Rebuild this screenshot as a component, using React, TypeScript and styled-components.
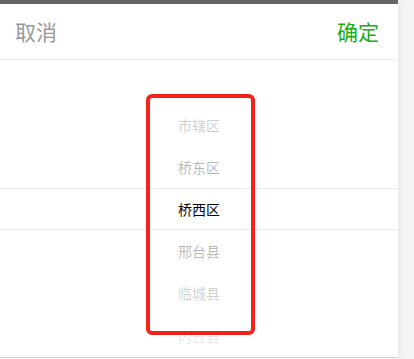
import React from "react";
import styled, { createGlobalStyle } from "styled-components";

const GlobalStyle = createGlobalStyle`
  html, body {
    margin: 0;
    padding: 0;
    background: #f5f5f5;
    font-family: "Noto Sans CJK SC", "Noto Sans", sans-serif;
  }
`;

const items = ["市辖区", "桥东区", "桥西区", "邢台县", "临城县", "内丘县"];
const selected = 2;

const App: React.FC = () => {
  return (
    <>
      <GlobalStyle />
      <Panel>
        <TopBar />
        <Header>
          <Action>取消</Action>
          <Action $primary>确定</Action>
        </Header>
        <Picker>
          <List>
            {items.map((name, i) => (
              <Item key={name} $active={i === selected}>
                {name}
              </Item>
            ))}
          </List>
          <Mask />
          <Indicator />
        </Picker>
        <Highlight />
      </Panel>
    </>
  );
};

export default App;

const Panel = styled.div`
  position: relative;
  width: 398px;
  height: 359px;
  background: #fff;
  box-shadow: 1px 0 6px rgba(0, 0, 0, 0.08);
  display: flex;
  flex-direction: column;
  overflow: hidden;
`;

const TopBar = styled.div`
  height: 4px;
  background: #666;
  flex: none;
`;

const Header = styled.div`
  height: 55px;
  flex: none;
  display: flex;
  align-items: center;
  justify-content: space-between;
  padding: 0 19px 0 15px;
  border-bottom: 1px solid #f0f0f0;
`;

const Action = styled.span<{ $primary?: boolean }>`
  font-size: 21px;
  line-height: 1;
  color: ${(p) => (p.$primary ? "#1aad19" : "#999")};
`;

const Picker = styled.div`
  position: relative;
  height: 297px;
  flex: none;
  overflow: hidden;
  border-bottom: 1px solid #d0d0d0;
`;

const List = styled.div`
  padding-top: 43.5px;
  display: flex;
  flex-direction: column;
`;

const Item = styled.div<{ $active?: boolean }>`
  height: 42.2px;
  display: flex;
  align-items: center;
  justify-content: center;
  font-size: 14px;
  color: #000;
`;

const Mask = styled.div`
  position: absolute;
  inset: 0;
  background-image: linear-gradient(
      180deg,
      rgba(255, 255, 255, 0.95),
      rgba(255, 255, 255, 0.68)
    ),
    linear-gradient(0deg, rgba(255, 255, 255, 0.95), rgba(255, 255, 255, 0.68));
  background-position: top, bottom;
  background-size: 100% 128px;
  background-repeat: no-repeat;
`;

const Indicator = styled.div`
  position: absolute;
  left: 0;
  right: 0;
  top: 128px;
  height: 40px;
  border-top: 1px solid #ececec;
  border-bottom: 1px solid #ececec;
`;

const Highlight = styled.div`
  position: absolute;
  left: 146px;
  top: 94px;
  width: 109px;
  height: 241px;
  box-sizing: border-box;
  border: 4px solid #f5221b;
  border-radius: 6px;
`;
